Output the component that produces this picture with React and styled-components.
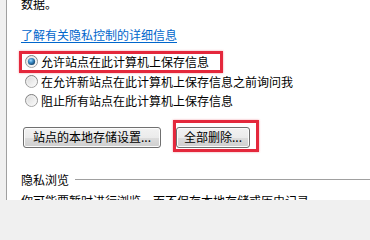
import React from "react";
import styled, { createGlobalStyle } from "styled-components";

const GlobalStyle = createGlobalStyle`
  html, body {
    margin: 0;
    padding: 0;
    width: 370px;
    height: 200px;
    overflow: hidden;
    background: #f0f0f0;
  }
  body {
    font-family: "Noto Sans CJK SC", "Noto Sans", sans-serif;
    font-size: 12px;
    color: #000;
  }
`;

const Frame = styled.div`
  height: 200px;
  padding-left: 6px;
  background: #f0f0f0;
`;

const Panel = styled.div`
  height: 200px;
  background: #fff;
  border-left: 1px solid #a0a0a0;
  padding-left: 14px;
  overflow: hidden;
`;

const Text = styled.p`
  margin: ${(p) => p.$mt || 0}px 0 0;
  line-height: 16px;
  white-space: nowrap;
`;

const InfoLink = styled.a`
  display: block;
  margin-top: 15px;
  line-height: 16px;
  color: #0066cc;
  text-decoration: underline;
  text-underline-offset: 2px;
  cursor: pointer;
`;

const RadioGroup = styled.div`
  display: flex;
  flex-direction: column;
  margin-top: 9px;
`;

const RadioRow = styled.label`
  position: relative;
  display: flex;
  align-items: center;
  gap: 3px;
  height: 19.5px;
  padding-left: 4px;
  white-space: nowrap;
`;

const Highlight = styled.span`
  position: absolute;
  left: ${(p) => p.$l}px;
  top: ${(p) => p.$t}px;
  width: ${(p) => p.$w}px;
  height: ${(p) => p.$h}px;
  box-sizing: border-box;
  border: 3px solid #e4283c;
  box-shadow: 0 0 2px rgba(228, 40, 60, 0.45);
  pointer-events: none;
`;

const ButtonRow = styled.div`
  display: flex;
  gap: 15px;
  margin-top: 16px;
  padding-left: 2px;
`;

const ButtonWrap = styled.div`
  position: relative;
`;

const Button = styled.button`
  box-sizing: border-box;
  width: ${(p) => p.$w}px;
  height: 21px;
  padding: 0;
  border: 1px solid #707070;
  border-radius: 3px;
  background: linear-gradient(#f2f2f2 0%, #ebebeb 50%, #dddddd 51%, #cfcfcf 100%);
  box-shadow: inset 0 0 0 1px #fcfcfc;
  font-family: inherit;
  font-size: 12px;
  color: #000;
  line-height: 18px;
`;

const SectionHeader = styled.div`
  display: flex;
  align-items: center;
  gap: 6px;
  margin-top: 24px;
  line-height: 16px;
`;

const Rule = styled.div`
  flex: 1;
  height: 1px;
  background: #a0a0a0;
`;

function Radio({ checked }) {
  return (
    <svg width="13" height="13" viewBox="0 0 13 13">
      <defs>
        <linearGradient id="rbBorder" x1="0" y1="0" x2="0" y2="1">
          <stop offset="0" stopColor="#7c7c7c" />
          <stop offset="1" stopColor="#a6a6a6" />
        </linearGradient>
        <linearGradient id="rbFill" x1="0" y1="0" x2="1" y2="1">
          <stop offset="0" stopColor="#d6d6d6" />
          <stop offset="1" stopColor="#ffffff" />
        </linearGradient>
        <radialGradient id="rbDot" cx="0.4" cy="0.35" r="0.65">
          <stop offset="0" stopColor="#a6dcff" />
          <stop offset="0.45" stopColor="#3e8fc9" />
          <stop offset="1" stopColor="#15466f" />
        </radialGradient>
      </defs>
      <circle cx="6.5" cy="6.5" r="6" fill="url(#rbFill)" stroke="url(#rbBorder)" strokeWidth="1" />
      <circle cx="6.5" cy="6.5" r="4.6" fill="none" stroke="#f4f4f4" strokeWidth="0.8" />
      {checked && <circle cx="6.5" cy="6.5" r="3.6" fill="url(#rbDot)" />}
    </svg>
  );
}

export default function App() {
  return (
    <>
      <GlobalStyle />
      <Frame>
        <Panel>
          <Text $mt={-4}>数据。</Text>
          <InfoLink>了解有关隐私控制的详细信息</InfoLink>
          <RadioGroup>
            <RadioRow>
              <Radio checked />
              允许站点在此计算机上保存信息
              <Highlight $l={-2} $t={-1.3} $w={204} $h={22} />
            </RadioRow>
            <RadioRow>
              <Radio />
              在允许新站点在此计算机上保存信息之前询问我
            </RadioRow>
            <RadioRow>
              <Radio />
              阻止所有站点在此计算机上保存信息
            </RadioRow>
          </RadioGroup>
          <ButtonRow>
            <ButtonWrap>
              <Button $w={138}>站点的本地存储设置...</Button>
            </ButtonWrap>
            <ButtonWrap>
              <Button $w={74}>全部删除...</Button>
              <Highlight $l={-3.3} $t={-6.5} $w={86} $h={32} />
            </ButtonWrap>
          </ButtonRow>
          <SectionHeader>
            隐私浏览
            <Rule />
          </SectionHeader>
          <Text $mt={5}>你可能要暂时进行浏览，而不保存本地存储或历史记录</Text>
        </Panel>
      </Frame>
    </>
  );
}
